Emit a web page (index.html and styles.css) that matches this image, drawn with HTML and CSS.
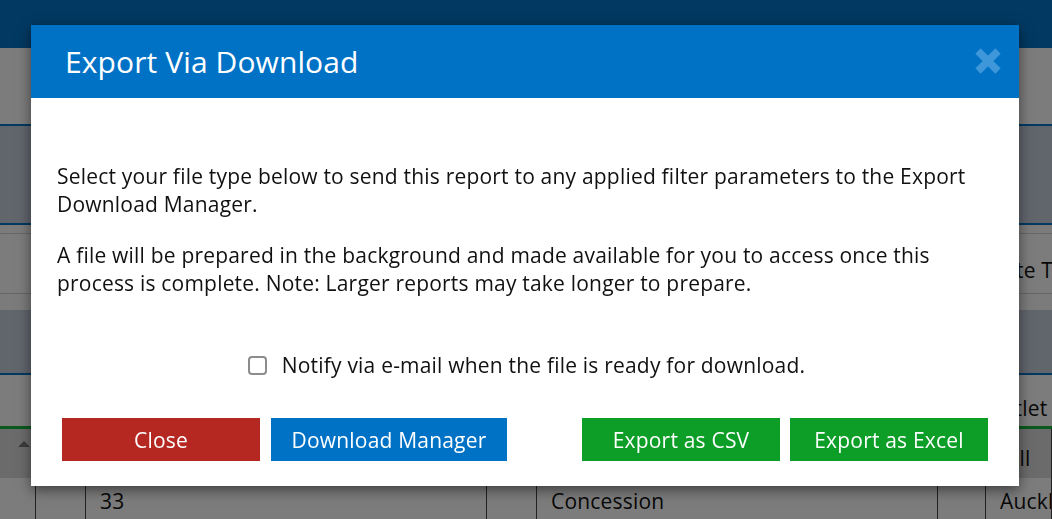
FILE: index.html
```html
<!DOCTYPE html>
<html lang="en">
<head>
  <meta charset="UTF-8">
  <title>Export Via Download</title>
  <meta name="viewport" content="width=device-width, initial-scale=1.0">
  <link rel="stylesheet" href="styles.css">
</head>
<body>

  <div class="page">
    <div class="topbar"></div>
    <div class="filters"></div>
    <div class="panel-head"></div>
    <div class="spacer"></div>
    <div class="field-row"><span class="field-label rate">Rate Type</span></div>
    <div class="spacer small"></div>
    <div class="panel-head second"></div>
    <div class="col-head"><span class="field-label outlet">Outlet</span></div>

    <div class="grid">
      <div class="cell head scroll"><span class="arrow"></span></div>
      <div class="cell head"></div>
      <div class="cell head"></div>
      <div class="cell head"></div>
      <div class="cell head"></div>
      <div class="cell head"></div>
      <div class="cell head">All</div>

      <div class="cell"></div>
      <div class="cell"></div>
      <div class="cell">33</div>
      <div class="cell"></div>
      <div class="cell">Concession</div>
      <div class="cell"></div>
      <div class="cell">Auckland</div>
    </div>
  </div>

  <div class="backdrop"></div>

  <div class="modal">
    <div class="modal-header">
      <h2>Export Via Download</h2>
      <svg class="close-x" width="26" height="26" viewBox="0 0 26 26">
        <path d="M3 3 L23 23 M23 3 L3 23" stroke="#3d97d9" stroke-width="7.5" stroke-linecap="butt"/>
      </svg>
    </div>
    <div class="modal-body">
      <p>Select your file type below to send this report to any applied filter parameters to the Export Download Manager.</p>
      <p>A file will be prepared in the background and made available for you to access once this process is complete. Note: Larger reports may take longer to prepare.</p>

      <label class="notify">
        <input type="checkbox">
        <span>Notify via e-mail when the file is ready for download.</span>
      </label>
    </div>
    <div class="modal-footer">
      <div class="btn-group">
        <button class="btn red">Close</button>
        <button class="btn blue wide">Download Manager</button>
      </div>
      <div class="btn-group">
        <button class="btn green">Export as CSV</button>
        <button class="btn green">Export as Excel</button>
      </div>
    </div>
  </div>

</body>
</html>
```

FILE: styles.css
```css
body {
  margin: 0;
  font-family: 'Open Sans', sans-serif;
  background: #fff;
  color: #111;
  overflow: hidden;
}
.page {
  width: 1052px;
  height: 519px;
  font-size: 21px;
  letter-spacing: 0.2px;
}
.topbar {
  height: 48px;
  background: #0573c5;
}
.filters {
  height: 76px;
  background: #f9f9f9;
  border-bottom: 2px solid #0573c5;
}
.panel-head {
  height: 97px;
  background: #c2cad8;
  border-bottom: 2px solid #0573c5;
}
.panel-head.second {
  height: 63px;
}
.spacer {
  height: 8px;
  background: #f6f6f6;
  border-bottom: 1px solid #cfcfcf;
}
.spacer.small {
  height: 16px;
  border-bottom: none;
  border-top: 1px solid #cfcfcf;
}
.field-row {
  height: 59px;
  background: #f9f9f9;
  display: flex;
  align-items: center;
}
.field-row .field-label {
  margin-top: 12px;
}
.col-head {
  height: 51px;
  background: #f9f9f9;
  border-bottom: 3px solid #14b33a;
  display: flex;
  align-items: flex-end;
}
.field-label {
  white-space: nowrap;
}
.field-label.rate {
  margin-left: 991px;
}
.field-label.outlet {
  margin-left: 985px;
  margin-bottom: 4px;
}
.grid {
  display: grid;
  grid-template-columns: 36px 50px 401px 50px 401px 48px 1fr;
}
.cell {
  border-right: 1px solid #444;
  padding-left: 14px;
  height: 41px;
  display: flex;
  align-items: center;
  padding-top: 4px;
  box-sizing: border-box;
  white-space: nowrap;
  overflow: hidden;
  background: #f9f9f9;
}
.cell.head {
  height: 49px;
  background: #d6d6d6;
  padding-left: 20px;
  padding-top: 8px;
}
.cell.scroll {
  padding: 0;
  justify-content: flex-end;
  align-items: flex-start;
}
.arrow {
  margin: 12px 5px 0 0;
  border: 6px solid transparent;
  border-bottom: 6px solid #777;
  border-top: none;
}

.backdrop {
  position: fixed;
  inset: 0;
  background: rgba(0, 0, 0, 0.5);
}

.modal {
  position: absolute;
  left: 31px;
  top: 25px;
  width: 988px;
  height: 461px;
  background: #fff;
  display: flex;
  flex-direction: column;
  box-shadow: 0 4px 12px rgba(0, 0, 0, 0.5);
}
.modal-header {
  height: 73px;
  background: #0072c6;
  display: flex;
  align-items: center;
  justify-content: space-between;
  padding: 0 18px 0 34px;
}
.modal-header h2 {
  margin: 0;
  color: #fff;
  font-weight: normal;
  font-size: 30px;
  letter-spacing: 0.1px;
}
.close-x {
  margin-top: -1px;
}
.modal-body {
  flex: 1;
  padding: 64px 26px 0 26px;
  font-size: 21px;
  letter-spacing: 0.2px;
  line-height: 28px;
}
.modal-body p {
  margin: 0 0 23px 0;
}
.notify {
  display: flex;
  align-items: center;
  justify-content: center;
  gap: 15px;
  margin-top: 54px;
  padding-left: 3px;
}
.notify input {
  appearance: none;
  width: 19px;
  height: 19px;
  margin: 0;
  border: 2px solid #8c8c8c;
  border-radius: 4px;
  background: #fff;
}
.modal-footer {
  display: flex;
  justify-content: space-between;
  padding: 0 31px 25px 31px;
}
.btn-group {
  display: flex;
  gap: 10px;
}
.btn {
  width: 198px;
  height: 43px;
  border: none;
  color: #fff;
  font-family: 'Open Sans', sans-serif;
  font-size: 21px;
  letter-spacing: 0.2px;
  cursor: pointer;
}
.btn.wide {
  width: 236px;
  margin-left: 1px;
}
.red { background: #b52822; }
.blue { background: #0072c6; }
.green { background: #0c9e26; }
```
